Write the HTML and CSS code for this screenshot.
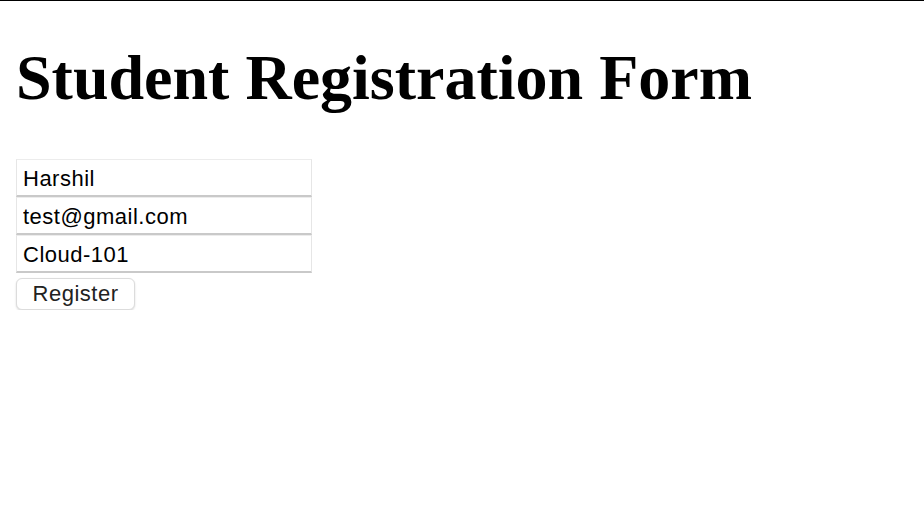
FILE: index.html
```html
<!DOCTYPE html>
<html>
<head>
<meta charset="utf-8">
<link rel="stylesheet" href="styles.css">
</head>
<body>
<div class="page">
  <h1 class="title">Student Registration Form</h1>
  <form class="form">
    <input class="field" type="text" value="Harshil">
    <input class="field" type="text" value="test@gmail.com">
    <input class="field" type="text" value="Cloud-101">
    <button class="btn" type="button">Register</button>
  </form>
</div>
</body>
</html>
```
FILE: styles.css
```css
html, body {
  margin: 0;
  padding: 0;
  background: #fff;
}
.page {
  border-top: 1px solid #000;
  padding: 0 16px;
}
.title {
  font-family: "Liberation Serif", "Times New Roman", serif;
  font-weight: bold;
  font-size: 64px;
  line-height: 74px;
  margin: 40px 0 44px;
  color: #000;
}
.form {
  display: flex;
  flex-direction: column;
  align-items: flex-start;
}
.field {
  box-sizing: border-box;
  display: block;
  width: 296px;
  height: 38px;
  margin: 0;
  padding: 2px 6px 0 6px;
  font-family: "Liberation Sans", Arial, sans-serif;
  font-size: 22px;
  letter-spacing: 0.5px;
  color: #000;
  background: #fff;
  border: 1px solid #e6e6e6;
  border-bottom: 2px solid #c9c9c9;
  border-top: 1px solid #ececec;
  outline: none;
}
.btn {
  box-sizing: border-box;
  margin-top: 5px;
  width: 119px;
  height: 32px;
  padding: 0 0 1px;
  font-family: "Liberation Sans", Arial, sans-serif;
  font-size: 22px;
  letter-spacing: 0.5px;
  color: #222;
  background: #fff;
  border: 1px solid #dcdcdc;
  border-radius: 6px;
  box-shadow: 0 1px 2px rgba(0,0,0,0.15);
}
```
